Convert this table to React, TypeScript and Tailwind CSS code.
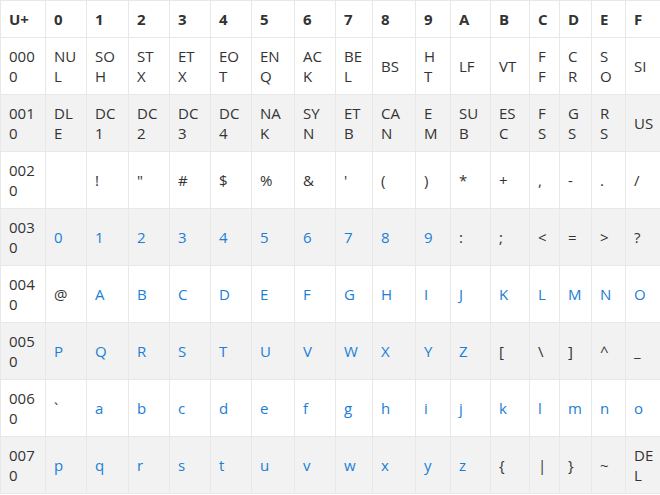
const cols = ["0", "1", "2", "3", "4", "5", "6", "7", "8", "9", "A", "B", "C", "D", "E", "F"]

const colWidths = [
  "w-[45px]", "w-[41px]", "w-[42px]", "w-[41px]", "w-[41px]", "w-[41px]", "w-[43px]", "w-[41px]",
  "w-[37px]", "w-[43px]", "w-[35px]", "w-[40px]", "w-[39px]", "w-[30px]", "w-[32px]", "w-[34px]", "w-[44px]",
]

// control names, wrapped the way the narrow columns break them
const control = [
  "NU\nL", "SO\nH", "ST\nX", "ET\nX", "EO\nT", "EN\nQ", "AC\nK", "BE\nL", "BS", "H\nT", "LF", "VT", "F\nF", "C\nR", "S\nO", "SI",
  "DL\nE", "DC\n1", "DC\n2", "DC\n3", "DC\n4", "NA\nK", "SY\nN", "ET\nB", "CA\nN", "E\nM", "SU\nB", "ES\nC", "F\nS", "G\nS", "R\nS", "US",
]

function label(code: number) {
  if (code < 32) return control[code]
  if (code === 32) return ""
  if (code === 127) return "DE\nL"
  return String.fromCharCode(code)
}

function isAlnum(s: string) {
  return s.length === 1 && /[A-Za-z0-9]/.test(s)
}

export default function App() {
  const rows = Array.from({ length: 8 }, (_, r) => r)

  return (
    <div className="w-[660px] h-[495px] overflow-hidden bg-white">
      <table
        className="table-fixed border-collapse w-[669px] text-[15px] leading-5 text-[#333]"
        style={{ fontFamily: '"Open Sans", "Noto Sans", sans-serif' }}
      >
        <colgroup>
          {colWidths.map((w, i) => (
            <col key={i} className={w} />
          ))}
        </colgroup>
        <thead>
          <tr>
            <th className="border border-[#e8e8e8] px-2 py-2 text-left font-bold">U+</th>
            {cols.map((c) => (
              <th key={c} className="border border-[#e8e8e8] px-2 py-2 text-left font-bold">
                {c}
              </th>
            ))}
          </tr>
        </thead>
        <tbody>
          {rows.map((r) => (
            <tr key={r} className={r % 2 === 1 ? "bg-[#f2f2f2]" : "bg-white"}>
              <td className="border border-[#e8e8e8] px-2 py-2 align-middle whitespace-pre-line">
                {`00${r}\n0`}
              </td>
              {cols.map((_, c) => {
                const s = label(r * 16 + c)
                return (
                  <td
                    key={c}
                    className={`border border-[#e8e8e8] px-2 py-2 align-middle whitespace-pre-line ${
                      isAlnum(s) ? "text-[#1a80d6]" : "text-[#333]"
                    }`}
                  >
                    {s}
                  </td>
                )
              })}
            </tr>
          ))}
        </tbody>
      </table>
    </div>
  )
}
